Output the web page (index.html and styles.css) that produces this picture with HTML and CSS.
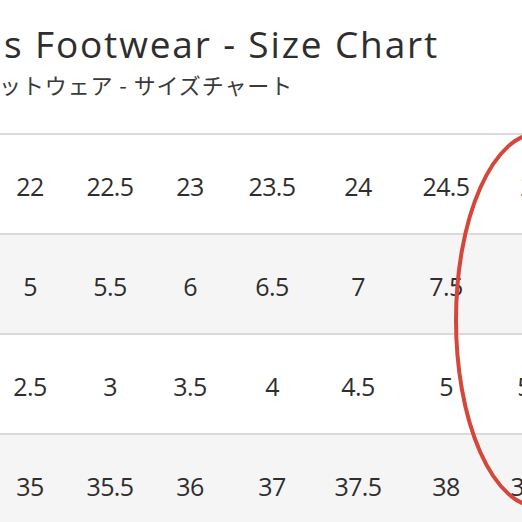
FILE: index.html
```html
<!DOCTYPE html>
<html lang="ja">
<head>
<meta charset="utf-8">
<link rel="stylesheet" href="styles.css">
</head>
<body>
<div class="page">
  <header class="head">
    <h1 class="title">s Footwear - Size Chart</h1>
    <p class="subtitle">ットウェア - サイズチャート</p>
  </header>
  <div class="chart">
    <div class="row">
      <span>22</span><span>22.5</span><span>23</span><span>23.5</span><span>24</span><span>24.5</span><span>25</span>
    </div>
    <div class="row alt">
      <span>5</span><span>5.5</span><span>6</span><span>6.5</span><span>7</span><span>7.5</span><span>8</span>
    </div>
    <div class="row">
      <span>2.5</span><span>3</span><span>3.5</span><span>4</span><span>4.5</span><span>5</span><span>5.5</span>
    </div>
    <div class="row alt">
      <span>35</span><span>35.5</span><span>36</span><span>37</span><span>37.5</span><span>38</span><span>38.5</span>
    </div>
    <svg class="circle" width="180" height="420" viewBox="0 0 180 420">
      <ellipse cx="85" cy="192" rx="83" ry="187" fill="none" stroke="#d4473a" stroke-width="4"/>
    </svg>
  </div>
</div>
</body>
</html>
```
FILE: styles.css
```css
html, body {
  margin: 0;
  padding: 0;
  background: #fff;
}
.page {
  width: 522px;
  height: 522px;
  overflow: hidden;
  position: relative;
  font-family: "Open Sans", "Noto Sans CJK JP", sans-serif;
  color: #333;
}
.head {
  padding-top: 22px;
  height: 111px;
  box-sizing: border-box;
}
.title {
  margin: 0 0 0 4px;
  white-space: nowrap;
  font-size: 37px;
  font-weight: 400;
  line-height: 44px;
  letter-spacing: 1.85px;
  color: #2e2e2e;
}
.subtitle {
  margin: 3px 0 0 -1px;
  white-space: nowrap;
  font-family: "Noto Sans CJK JP", sans-serif;
  font-size: 22px;
  line-height: 30px;
  letter-spacing: 0.9px;
  color: #3a3a3a;
}
.chart {
  position: relative;
  border-top: 2px solid #dadada;
  margin-top: 22px;
}
.row {
  display: grid;
  grid-template-columns: 80px 80px 80px 84px 88px 88px 88px;
  margin-left: -10px;
  height: 94px;
  border-bottom: 2px solid #dadada;
  align-items: center;
  justify-items: center;
  font-size: 25px;
  letter-spacing: -0.6px;
  color: #2e2e2e;
  padding-top: 4px;
}
.alt {
  background: #f5f5f5;
}
.circle {
  position: absolute;
  left: 454px;
  top: -7px;
}
```
